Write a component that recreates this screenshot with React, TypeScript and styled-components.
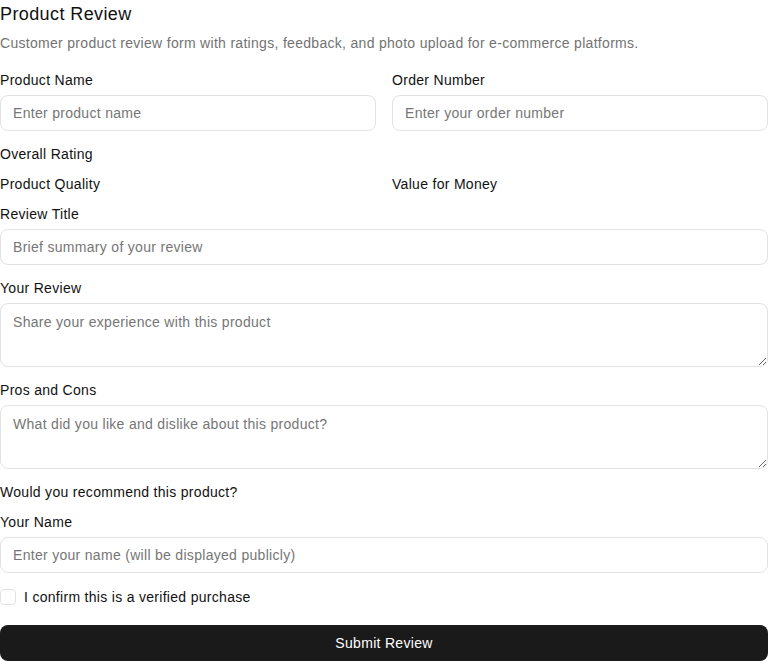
import React from 'react'
import styled, { createGlobalStyle } from 'styled-components'

const GlobalStyle = createGlobalStyle`
  body {
    margin: 0;
    font-family: "Liberation Sans", Arial, sans-serif;
    letter-spacing: 0.3px;
    color: #111;
    background: #fff;
  }
  * { box-sizing: border-box; }
`

const Page = styled.div`
  width: 768px;
`

const Header = styled.div`
  margin-bottom: 20px;
`

const Title = styled.h2`
  margin: 0 0 5px;
  font-size: 18px;
  font-weight: 400;
  line-height: 28px;
  letter-spacing: 0.4px;
  color: #111;
`

const Subtitle = styled.p`
  margin: 0;
  font-size: 14px;
  line-height: 20px;
  color: #737373;
`

const Form = styled.form`
  display: flex;
  flex-direction: column;
  gap: 16px;
`

const Row = styled.div`
  display: grid;
  grid-template-columns: 1fr 1fr;
  gap: 16px;
`

const Field = styled.div`
  display: flex;
  flex-direction: column;
`

const Label = styled.label<{ $bare?: boolean }>`
  font-size: 14px;
  line-height: 14px;
  color: #111;
  margin-bottom: ${p => (p.$bare ? 0 : 8)}px;
`

const Input = styled.input`
  height: 36px;
  padding: 0 12px;
  border: 1px solid #e2e2e2;
  border-radius: 8px;
  font: inherit;
  font-size: 14px;
  letter-spacing: 0.3px;
  color: #111;
  background: #fff;
  outline: none;
  &::placeholder { color: #767676; }
`

const TextArea = styled.textarea`
  height: 64px;
  padding: 9px 12px;
  border: 1px solid #e2e2e2;
  border-radius: 8px;
  font: inherit;
  font-size: 14px;
  line-height: 18px;
  letter-spacing: 0.3px;
  color: #111;
  resize: vertical;
  outline: none;
  &::placeholder { color: #767676; }
`

const CheckRow = styled.label`
  display: flex;
  align-items: center;
  gap: 8px;
  height: 16px;
  font-size: 14px;
  color: #111;
`

const Box = styled.input.attrs({ type: 'checkbox' })`
  appearance: none;
  margin: 0;
  width: 16px;
  height: 16px;
  border: 1px solid #e2e2e2;
  border-radius: 4px;
  background: #fff;
`

const Submit = styled.button`
  margin-top: 4px;
  height: 36px;
  border: none;
  border-radius: 8px;
  background: #1a1a1a;
  color: #fff;
  font: inherit;
  font-size: 14px;
  letter-spacing: 0.3px;
  cursor: pointer;
`

export default function App() {
  return (
    <Page>
      <GlobalStyle />
      <Header>
        <Title>Product Review</Title>
        <Subtitle>
          Customer product review form with ratings, feedback, and photo upload for e-commerce platforms.
        </Subtitle>
      </Header>
      <Form onSubmit={e => e.preventDefault()}>
        <Row>
          <Field>
            <Label>Product Name</Label>
            <Input placeholder='Enter product name' />
          </Field>
          <Field>
            <Label>Order Number</Label>
            <Input placeholder='Enter your order number' />
          </Field>
        </Row>
        <Field>
          <Label $bare>Overall Rating</Label>
        </Field>
        <Row>
          <Field>
            <Label $bare>Product Quality</Label>
          </Field>
          <Field>
            <Label $bare>Value for Money</Label>
          </Field>
        </Row>
        <Field>
          <Label>Review Title</Label>
          <Input placeholder='Brief summary of your review' />
        </Field>
        <Field>
          <Label>Your Review</Label>
          <TextArea placeholder='Share your experience with this product' />
        </Field>
        <Field>
          <Label>Pros and Cons</Label>
          <TextArea placeholder='What did you like and dislike about this product?' />
        </Field>
        <Field>
          <Label $bare>Would you recommend this product?</Label>
        </Field>
        <Field>
          <Label>Your Name</Label>
          <Input placeholder='Enter your name (will be displayed publicly)' />
        </Field>
        <CheckRow>
          <Box />
          I confirm this is a verified purchase
        </CheckRow>
        <Submit type='submit'>Submit Review</Submit>
      </Form>
    </Page>
  )
}
